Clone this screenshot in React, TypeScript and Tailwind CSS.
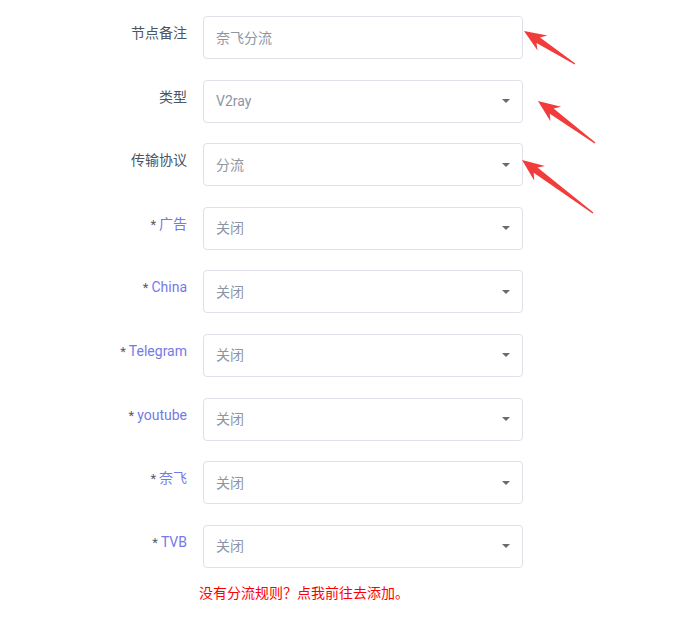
import React from "react";

type Row = {
  label: string;
  value: string;
  required?: boolean;
  select?: boolean;
};

const rows: Row[] = [
  { label: "节点备注", value: "奈飞分流" },
  { label: "类型", value: "V2ray", select: true },
  { label: "传输协议", value: "分流", select: true },
  { label: "广告", value: "关闭", required: true, select: true },
  { label: "China", value: "关闭", required: true, select: true },
  { label: "Telegram", value: "关闭", required: true, select: true },
  { label: "youtube", value: "关闭", required: true, select: true },
  { label: "奈飞", value: "关闭", required: true, select: true },
  { label: "TVB", value: "关闭", required: true, select: true },
];

// annotation arrows drawn on top of the screenshot
const arrows = [
  { tip: [524, 31], tail: [575, 64] },
  { tip: [538, 101], tail: [595, 143] },
  { tip: [522, 160], tail: [593, 213] },
];

function arrowPoints(tip: number[], tail: number[]) {
  const dx = tip[0] - tail[0];
  const dy = tip[1] - tail[1];
  const len = Math.hypot(dx, dy);
  const ux = dx / len;
  const uy = dy / len;
  const px = -uy;
  const py = ux;
  const headLen = 22;
  const headHalf = 9;
  const neckHalf = 3.2;
  const bx = tip[0] - ux * headLen;
  const by = tip[1] - uy * headLen;
  const nx = tip[0] - ux * (headLen - 5);
  const ny = tip[1] - uy * (headLen - 5);
  const pts = [
    [tip[0], tip[1]],
    [bx + px * headHalf, by + py * headHalf],
    [nx + px * neckHalf, ny + py * neckHalf],
    [tail[0] + px * 0.6, tail[1] + py * 0.6],
    [tail[0] - px * 0.6, tail[1] - py * 0.6],
    [nx - px * neckHalf, ny - py * neckHalf],
    [bx - px * headHalf, by - py * headHalf],
  ];
  return pts.map((p) => p.map((v) => v.toFixed(1)).join(",")).join(" ");
}

function Caret() {
  return (
    <svg width="10" height="6" viewBox="0 0 10 6" className="shrink-0">
      <path d="M1 1h8L5 5z" fill="#6b6b6b" />
    </svg>
  );
}

export default function App() {
  return (
    <div
      className="relative min-h-[617px] w-[680px] bg-white"
      style={{ fontFamily: 'Roboto, "Noto Sans CJK SC", sans-serif' }}
    >
      <div className="flex flex-col gap-[20.6px] pt-[16px]">
        {rows.map((row) => (
          <div key={row.label} className="flex items-start">
            <div className="w-[187px] pt-[7px] text-right text-[14px] leading-[20px]">
              {row.required ? (
                <span className="text-[#7579e8]">
                  <span className="mr-[3px] text-[13px] text-[#555b66]">*</span>
                  {row.label}
                </span>
              ) : (
                <span className="text-[#4b5563]">{row.label}</span>
              )}
            </div>
            <div className="ml-[16px] flex h-[43px] w-[320px] items-center justify-between rounded-[4px] border border-[#dfe1e8] bg-white pl-[12px] pr-[11px]">
              <span className="text-[14px] leading-[20px] text-[#8c95a4]">{row.value}</span>
              {row.select && <Caret />}
            </div>
          </div>
        ))}
      </div>
      <p className="mt-[15px] pl-[199px] text-[14px] leading-[20px] text-[#ff0000]">
        没有分流规则？点我前往去添加。
      </p>

      <svg className="pointer-events-none absolute left-0 top-0" width="680" height="617">
        {arrows.map((a, i) => (
          <polygon key={i} points={arrowPoints(a.tip, a.tail)} fill="#f23b3b" />
        ))}
      </svg>
    </div>
  );
}
